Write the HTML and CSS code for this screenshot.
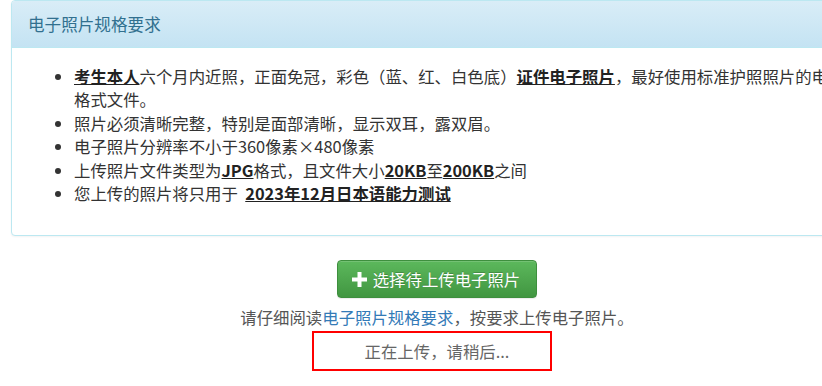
FILE: index.html
```html
<!DOCTYPE html>
<html lang="zh-CN">

<head>
    <meta charset="UTF-8">
    <meta name="viewport" content="width=device-width, initial-scale=1.0">
    <title>上传电子照片</title>

    <link rel="stylesheet" href="styles.css">
</head>

<body>
    <div class="container">
        <div class="panel panel-info">
            <div class="panel-heading">电子照片规格要求</div>
            <div class="panel-body">
                <ul class="req-list">
                    <li><b class="hl">考生本人</b>六个月内近照，正面免冠，彩色（蓝、红、白色底）<b class="hl">证件电子照片</b>，最好使用标准护照照片的电子格式文件。</li>
                    <li>照片必须清晰完整，特别是面部清晰，显示双耳，露双眉。</li>
                    <li>电子照片分辨率不小于360像素×480像素</li>
                    <li>上传照片文件类型为<b class="hl">JPG</b>格式，且文件大小<b class="hl">20KB</b>至<b class="hl">200KB</b>之间</li>
                    <li>您上传的照片将只用于 &nbsp;<b class="hl">2023年12月日本语能力测试</b></li>
                </ul>
            </div>
        </div>

        <div class="upload">
            <button class="btn-upload" type="button">
                <svg class="ico-plus" width="15" height="15" viewBox="0 0 15 15">
                    <path d="M5.5 0h4v5.5h5.5v4h-5.5v5.5h-4v-5.5h-5.5v-4h5.5z" fill="#fff"/>
                </svg>
                选择待上传电子照片
            </button>
            <p class="upload-tip">请仔细阅读<a href="#" class="tip-link">电子照片规格要求</a>，按要求上传电子照片。</p>
            <div class="upload-status">正在上传，请稍后...</div>
        </div>
    </div>
</body>

</html>
```

FILE: styles.css
```css
html, body {
    margin: 0;
    padding: 0;
    overflow: hidden;
}

body {
    background: #fff;
    color: #333;
    font-family: "Noto Sans CJK SC", "Liberation Sans", sans-serif;
    font-size: 16.4px;
    line-height: 23.4px;
}

.container {
    width: 852px;
    margin-left: 11px;
}

.panel {
    border: 1px solid #bce8f1;
    border-radius: 4px;
    box-shadow: 0 1px 2px rgba(0, 0, 0, .05);
    background: #fff;
}

.panel-heading {
    padding: 12px 16px;
    line-height: 22px;
    font-size: 16.6px;
    color: #31708f;
    background-image: linear-gradient(to bottom, #d9edf7 0, #c4e3f3 100%);
    border-bottom: 1px solid #bce8f1;
    border-radius: 3px 3px 0 0;
}

.panel-body {
    padding: 15px 15px 14px;
}

.req-list {
    margin: 2px 0 16px;
    padding-left: 47px;
}

.hl {
    font-weight: bold;
    color: #222;
    text-decoration: underline;
}

.upload {
    display: flex;
    flex-direction: column;
    align-items: center;
    padding-top: 24px;
}

.btn-upload {
    display: flex;
    align-items: center;
    gap: 6px;
    height: 38px;
    padding: 0 16px 0 14px;
    font-family: inherit;
    font-size: 16.4px;
    color: #fff;
    background-image: linear-gradient(to bottom, #5cb85c 0, #419641 100%);
    border: 1px solid #3e8f3e;
    border-radius: 4px;
    box-shadow: inset 0 1px 0 rgba(255, 255, 255, .15), 0 1px 1px rgba(0, 0, 0, .075);
    text-shadow: 0 -1px 0 rgba(0, 0, 0, .2);
}

.upload-tip {
    margin: 8px 0 3px;
    color: #555;
    line-height: 22px;
}

.tip-link {
    color: #337ab7;
    text-decoration: none;
}

.upload-status {
    box-sizing: border-box;
    width: 240px;
    height: 40px;
    margin-right: 10px;
    padding-left: 10px;
    border: 2px solid #f00;
    color: #666;
    line-height: 36px;
    text-align: center;
}
```
